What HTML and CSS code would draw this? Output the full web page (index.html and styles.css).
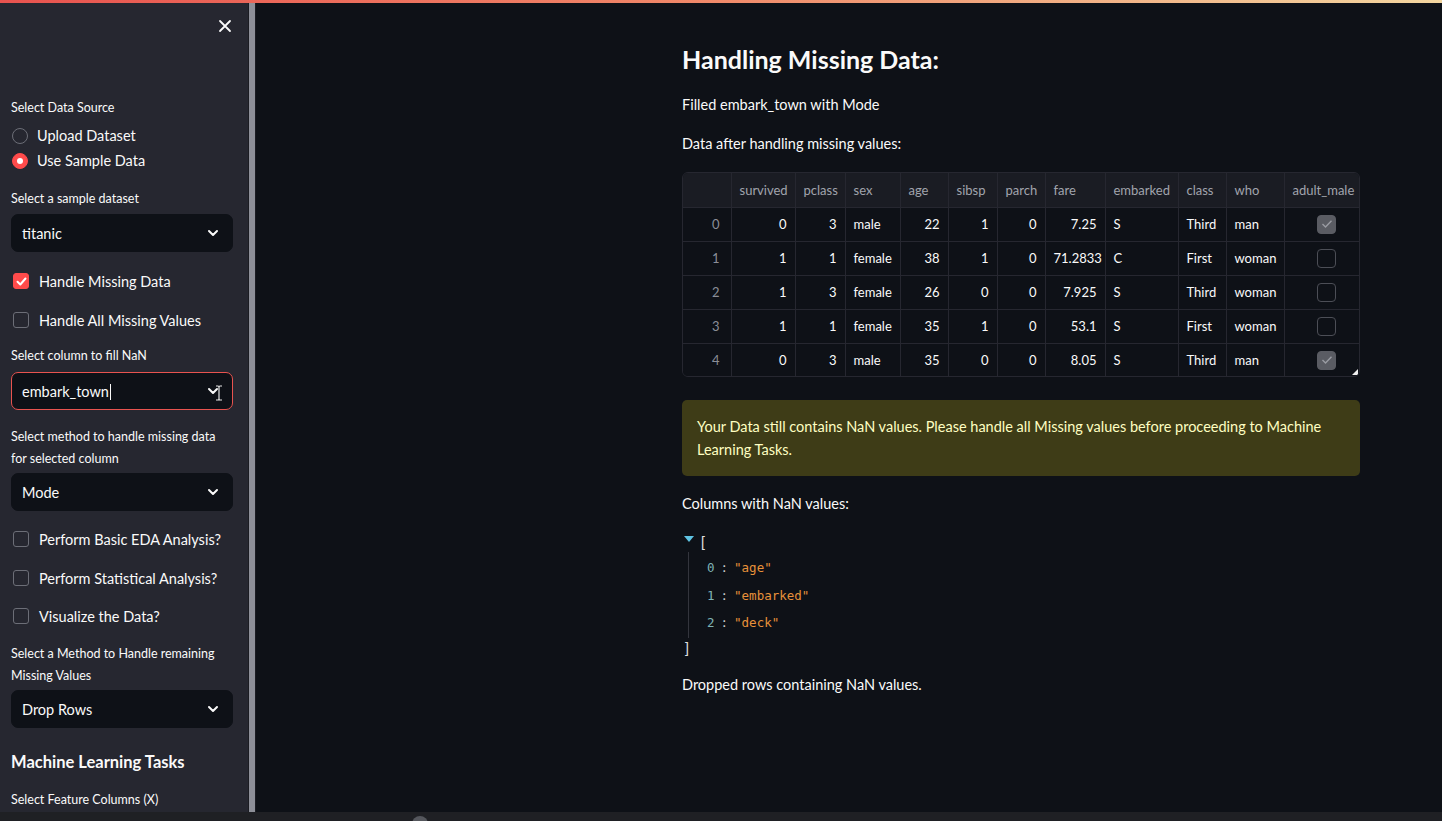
FILE: index.html
```html
<!DOCTYPE html>
<html>
<head>
<meta charset="utf-8">
<link rel="stylesheet" href="styles.css">
</head>
<body>
<div class="app">
  <div class="decoration"></div>
  <div class="shell">
    <aside class="sidebar">
      <div class="sb-top">
        <svg class="close" width="14" height="14" viewBox="0 0 14 14"><path d="M2 2 L12 12 M12 2 L2 12" stroke="#fafafa" stroke-width="1.8" stroke-linecap="round"/></svg>
      </div>
      <div class="label l-source">Select Data Source</div>
      <div class="radios">
        <div class="radio-row"><span class="radio"></span><span>Upload Dataset</span></div>
        <div class="radio-row"><span class="radio on"></span><span>Use Sample Data</span></div>
      </div>
      <div class="label l-sample">Select a sample dataset</div>
      <div class="select s1"><span>titanic</span><svg class="chev" width="12" height="8" viewBox="0 0 12 8"><path d="M2 2 L6 6 L10 2" fill="none" stroke="#fafafa" stroke-width="2" stroke-linecap="round" stroke-linejoin="round"/></svg></div>
      <div class="cb-row c1"><span class="cb on"><svg width="15" height="15" viewBox="0 0 15 15"><path d="M3.5 7.8 L6.3 10.5 L11.5 4.5" fill="none" stroke="#fff" stroke-width="2" stroke-linecap="round" stroke-linejoin="round"/></svg></span><span>Handle Missing Data</span></div>
      <div class="cb-row c2"><span class="cb"></span><span>Handle All Missing Values</span></div>
      <div class="label l-col">Select column to fill NaN</div>
      <div class="select s2 focus"><span>embark_town<span class="caret"></span></span>
        <svg class="chev" width="12" height="8" viewBox="0 0 12 8"><path d="M2 2 L6 6 L10 2" fill="none" stroke="#fafafa" stroke-width="2" stroke-linecap="round" stroke-linejoin="round"/></svg>
        <svg class="ibeam" width="8" height="16" viewBox="0 0 8 16"><path d="M1 1 H3 Q4 1 4 2.5 V13.5 Q4 15 3 15 H1 M7 1 H5 Q4 1 4 2.5 M4 13.5 Q4 15 5 15 H7" fill="none" stroke="#e8e8e8" stroke-width="1.2"/></svg>
      </div>
      <div class="label two l-method">Select method to handle missing data for selected column</div>
      <div class="select s3"><span>Mode</span><svg class="chev" width="12" height="8" viewBox="0 0 12 8"><path d="M2 2 L6 6 L10 2" fill="none" stroke="#fafafa" stroke-width="2" stroke-linecap="round" stroke-linejoin="round"/></svg></div>
      <div class="cb-row c3"><span class="cb"></span><span>Perform Basic EDA Analysis?</span></div>
      <div class="cb-row c4"><span class="cb"></span><span>Perform Statistical Analysis?</span></div>
      <div class="cb-row c5"><span class="cb"></span><span>Visualize the Data?</span></div>
      <div class="label two l-remain">Select a Method to Handle remaining Missing Values</div>
      <div class="select s4"><span>Drop Rows</span><svg class="chev" width="12" height="8" viewBox="0 0 12 8"><path d="M2 2 L6 6 L10 2" fill="none" stroke="#fafafa" stroke-width="2" stroke-linecap="round" stroke-linejoin="round"/></svg></div>
      <div class="sb-heading">Machine Learning Tasks</div>
      <div class="label l-feat">Select Feature Columns (X)</div>
      <div class="select s5"></div>
    </aside>
    <div class="scroll-track"><div class="scroll-thumb"></div></div>
    <main class="main">
      <div class="content">
        <h2 class="title">Handling Missing Data:</h2>
        <p class="txt t1">Filled embark_town with Mode</p>
        <p class="txt t2">Data after handling missing values:</p>
        <div class="table-wrap">
          <table class="df">
            <thead>
              <tr><th class="idx"></th><th class="w-surv">survived</th><th class="w-pc">pclass</th><th class="w-sex">sex</th><th class="w-age">age</th><th class="w-sib">sibsp</th><th class="w-par">parch</th><th class="w-fare">fare</th><th class="w-emb">embarked</th><th class="w-cls">class</th><th class="w-who">who</th><th class="w-am">adult_male</th></tr>
            </thead>
            <tbody>
              <tr><td class="idx">0</td><td class="n">0</td><td class="n">3</td><td>male</td><td class="n">22</td><td class="n">1</td><td class="n">0</td><td class="n">7.25</td><td>S</td><td>Third</td><td>man</td><td class="ck"><span class="tcb on"><svg width="12" height="10" viewBox="0 0 12 10"><path d="M1.5 5 L4.5 8 L10.5 1.8" fill="none" stroke="#9a9ca3" stroke-width="1.4"/></svg></span></td></tr>
              <tr><td class="idx">1</td><td class="n">1</td><td class="n">1</td><td>female</td><td class="n">38</td><td class="n">1</td><td class="n">0</td><td class="n">71.2833</td><td>C</td><td>First</td><td>woman</td><td class="ck"><span class="tcb"></span></td></tr>
              <tr><td class="idx">2</td><td class="n">1</td><td class="n">3</td><td>female</td><td class="n">26</td><td class="n">0</td><td class="n">0</td><td class="n">7.925</td><td>S</td><td>Third</td><td>woman</td><td class="ck"><span class="tcb"></span></td></tr>
              <tr><td class="idx">3</td><td class="n">1</td><td class="n">1</td><td>female</td><td class="n">35</td><td class="n">1</td><td class="n">0</td><td class="n">53.1</td><td>S</td><td>First</td><td>woman</td><td class="ck"><span class="tcb"></span></td></tr>
              <tr><td class="idx">4</td><td class="n">0</td><td class="n">3</td><td>male</td><td class="n">35</td><td class="n">0</td><td class="n">0</td><td class="n">8.05</td><td>S</td><td>Third</td><td>man</td><td class="ck"><span class="tcb on"><svg width="12" height="10" viewBox="0 0 12 10"><path d="M1.5 5 L4.5 8 L10.5 1.8" fill="none" stroke="#9a9ca3" stroke-width="1.4"/></svg></span></td></tr>
            </tbody>
          </table>
          <span class="resize"></span>
        </div>
        <div class="warning">Your Data still contains NaN values. Please handle all Missing values before proceeding to Machine Learning Tasks.</div>
        <p class="txt t3">Columns with NaN values:</p>
        <div class="json">
          <div class="json-open"><span class="tri"></span><span class="br">[</span></div>
          <div class="json-body">
            <div class="ji"><span class="jk">0</span><span class="jc">:</span><span class="jv">"age"</span></div>
            <div class="ji"><span class="jk">1</span><span class="jc">:</span><span class="jv">"embarked"</span></div>
            <div class="ji"><span class="jk">2</span><span class="jc">:</span><span class="jv">"deck"</span></div>
          </div>
          <div class="json-close br">]</div>
        </div>
        <p class="txt t4">Dropped rows containing NaN values.</p>
      </div>
    </main>
  </div>
  <div class="bottom-bar"><span class="knob"></span></div>
</div>
</body>
</html>
```
FILE: styles.css
```css
* { box-sizing: border-box; }
html, body { margin: 0; padding: 0; }
body {
  background: #0e1117;
  color: #fafafa;
  font-family: Lato, "Liberation Sans", sans-serif;
  width: 1442px;
  height: 821px;
  overflow: hidden;
}
.app { position: relative; width: 1442px; height: 821px; display: flex; flex-direction: column; }
.decoration {
  height: 3px;
  flex: none;
  background: linear-gradient(90deg, #e8534f 0%, #f08a6a 50%, #f3d6a0 100%);
}
.shell { flex: 1; display: flex; min-height: 0; }
.sidebar {
  width: 248px;
  flex: none;
  background: #262730;
  padding: 0 15px 0 11px;
  overflow: hidden;
  font-size: 14px;
}
.scroll-track { width: 8px; flex: none; background: #1b1c22; padding-left: 1px; }
.scroll-thumb { width: 6px; height: 100%; background: #8d8f98; }
.main { flex: 1; background: #0e1117; padding-left: 426px; }
.content { width: 678px; }

/* sidebar */
.sb-top { height: 52px; display: flex; justify-content: flex-end; align-items: flex-start; padding-top: 16px; padding-right: 1px; }
.label { font-size: 12.5px; line-height: 20px; color: #fafafa; }
.label.two { line-height: 21.5px; }
.l-source { margin-top: 43px; }
.radios { margin-top: 5px; }
.radio-row { height: 25px; display: flex; align-items: center; gap: 9px; font-size: 14.5px; }
.radio { width: 16px; height: 16px; border-radius: 50%; border: 1px solid #6c6e77; margin-left: 1px; flex: none; }
.radio.on { background: #ff4b4b; border-color: #ff4b4b; position: relative; }
.radio.on::after { content: ""; position: absolute; left: 4px; top: 4px; width: 6px; height: 6px; border-radius: 50%; background: #fff; }
.l-sample { margin-top: 16px; }
.select {
  height: 38px;
  background: #0e1117;
  border-radius: 7px;
  border: 1px solid #0e1117;
  display: flex;
  align-items: center;
  justify-content: space-between;
  padding: 0 13px 0 10px;
  font-size: 14.5px;
  position: relative;
}
.select.focus { border-color: #e8534f; }
.caret { display: inline-block; width: 1px; height: 16px; background: #fafafa; vertical-align: -3px; margin-left: 1px; }
.ibeam { position: absolute; right: 9px; top: 12px; }
.s1 { margin-top: 5px; }
.cb-row { height: 24px; display: flex; align-items: center; gap: 10px; font-size: 14.5px; }
.cb { width: 16px; height: 16px; border: 1px solid #6c6e77; border-radius: 3px; margin-left: 2px; flex: none; display: flex; }
.cb.on { background: #ff4b4b; border-color: #ff4b4b; }
.cb.on svg { margin: -0.5px; }
.c1 { margin-top: 17px; }
.c2 { margin-top: 15px; }
.l-col { margin-top: 14px; }
.s2 { margin-top: 6px; }
.l-method { margin-top: 16px; }
.s3 { margin-top: 4px; }
.c3 { margin-top: 16px; }
.c4 { margin-top: 15px; }
.c5 { margin-top: 14px; }
.l-remain { margin-top: 15px; }
.s4 { margin-top: 4px; }
.sb-heading { margin-top: 22px; font-size: 16.5px; font-weight: 700; line-height: 24px; }
.l-feat { margin-top: 16px; }
.s5 { margin-top: 5px; }

/* main */
.title { margin: 37px 0 0; font-size: 25px; font-weight: 700; line-height: 38px; }
.txt { margin: 0; font-size: 14.5px; line-height: 22px; }
.t1 { margin-top: 16px; }
.t2 { margin-top: 17px; }
.table-wrap {
  margin-top: 17px;
  position: relative;
  height: 205px;
  border: 1px solid #262730;
  border-radius: 6px;
  overflow: hidden;
  background: #0e1117;
  padding-right: 6px;
}
.df { border-collapse: collapse; table-layout: fixed; width: 678px; font-size: 13px; }
.df th, .df td { border-right: 1px solid #262730; border-bottom: 1px solid #262730; padding: 0 8px; white-space: nowrap; overflow: hidden; }
.df th { height: 34px; background: #1a1c23; color: #a1a4ad; font-weight: 400; text-align: left; }
.df td { height: 34px; color: #fafafa; }
.df tbody tr:last-child td { border-bottom: none; }
.df td.n { text-align: right; }
.df td.idx { color: #8b8e97; text-align: right; padding-right: 11px; background: #0e1117; }
.df th.idx { width: 48px; }
.w-surv { width: 64px; }
.w-pc { width: 50px; }
.w-sex { width: 55px; }
.w-age { width: 48px; }
.w-sib { width: 49px; }
.w-par { width: 48px; }
.w-fare { width: 60px; }
.w-emb { width: 73px; }
.w-cls { width: 48px; }
.w-who { width: 58px; }
.w-am { width: 77px; }
.df td.ck { text-align: center; padding: 0 0 0 8px; }
.tcb { display: inline-flex; align-items: center; justify-content: center; width: 19px; height: 19px; border: 1px solid #4c4e56; border-radius: 4px; vertical-align: middle; }
.tcb.on { background: #5a5c63; border-color: #5a5c63; }
.resize { position: absolute; right: 1px; bottom: 1px; width: 0; height: 0; border-left: 6px solid transparent; border-bottom: 6px solid #f0f0f0; }
.warning {
  margin-top: 23px;
  background: #3e3c17;
  color: #ffffc2;
  border-radius: 5px;
  padding: 15px 16px 15px 15px;
  font-size: 14.5px;
  line-height: 23px;
}
.t3 { margin-top: 17px; }
.json { margin-top: 17px; font-family: "DejaVu Sans Mono", "Liberation Mono", monospace; font-size: 12.5px; position: relative; }
.json-open { height: 20px; display: flex; align-items: center; padding-left: 2px; }
.tri { width: 0; height: 0; border-left: 5px solid transparent; border-right: 5px solid transparent; border-top: 6px solid #5fc4e4; margin-right: 7px; margin-top: -6px; }
.br { color: #e0e0e0; font-family: "Liberation Sans", sans-serif; font-size: 14px; }
.json-body { margin-left: 6px; border-left: 1px solid #33353d; padding: 2px 0 1px 18px; }
.ji { height: 27.5px; display: flex; align-items: center; gap: 6px; }
.jk { color: #7fb3b5; }
.jc { color: #c8c8c8; }
.jv { color: #e8913a; }
.json-close { padding-left: 3px; height: 20px; line-height: 20px; }
.t4 { margin-top: 16px; }

.bottom-bar { position: absolute; left: 0; right: 0; bottom: 0; height: 9px; background: #1f2024; }
.knob { position: absolute; left: 412px; top: 4px; width: 16px; height: 16px; border-radius: 50%; background: #55575d; }
```
